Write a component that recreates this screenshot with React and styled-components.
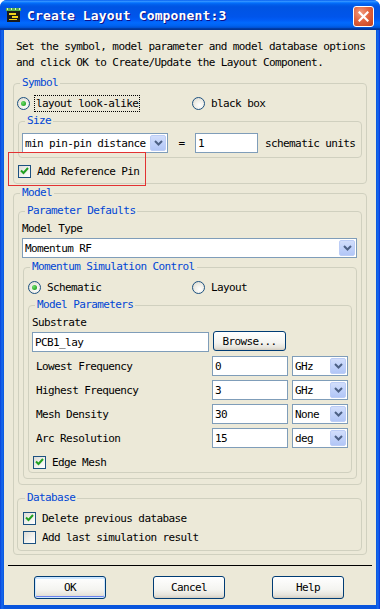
import React from "react";
import styled, { createGlobalStyle } from "styled-components";

const GlobalStyle = createGlobalStyle`
  html, body {
    margin: 0;
    padding: 0;
    background: #ffffff;
  }
  body {
    font-family: "DejaVu Sans Mono", "Liberation Mono", monospace;
    font-size: 11px;
    letter-spacing: -0.6px;
    color: #000000;
  }
  * {
    box-sizing: border-box;
  }
`;

const Window = styled.div`
  width: 380px;
  height: 609px;
  display: flex;
  flex-direction: column;
  border-radius: 7px 7px 0 0;
  overflow: hidden;
  background: linear-gradient(to right, #0841d8 0, #166aee 2px, #0855dd 4px, #0855dd 376px, #166aee 378px, #0831d9 380px);
`;

const TitleBar = styled.div`
  height: 30px;
  flex: none;
  display: flex;
  align-items: center;
  padding: 0 6px 0 6px;
  background: linear-gradient(
    to bottom,
    #0058ee 0%,
    #3593ff 4%,
    #288eff 6%,
    #127dff 8%,
    #036ffc 10%,
    #0262ee 14%,
    #0057e5 20%,
    #0054e3 24%,
    #0055eb 56%,
    #005bf5 66%,
    #026afe 76%,
    #0062ef 86%,
    #0052d6 92%,
    #0040ab 94%,
    #003092 100%
  );
`;

const TitleText = styled.span`
  margin-left: 6px;
  margin-top: 1px;
  color: #ffffff;
  font-weight: bold;
  font-size: 13px;
  letter-spacing: 0.15px;
  text-shadow: 1px 1px #0f1089;
  white-space: nowrap;
`;

const CloseButton = styled.div`
  margin-left: auto;
  margin-top: 2px;
  width: 21px;
  height: 21px;
  border: 1px solid #ffffff;
  border-radius: 3px;
  background: radial-gradient(circle at 35% 30%, #f29c80 0%, #e3643f 45%, #c4401c 100%);
  display: flex;
  align-items: center;
  justify-content: center;
`;

const Client = styled.div`
  flex: 1;
  margin: 0 4px 4px;
  background: #ece9d8;
  padding-top: 9px;
  display: flex;
  flex-direction: column;
`;

const Intro = styled.div`
  padding: 0 12px;
  line-height: 16px;
  white-space: nowrap;
`;

const Group = styled.fieldset`
  margin: ${(p) => p.$margin || "0"};
  padding: ${(p) => p.$padding || "0"};
  border: 1px solid #d0d0bf;
  border-radius: 4px;
  min-width: 0;
  display: flex;
  flex-direction: column;
`;

const Legend = styled.legend`
  color: #0046d5;
  padding: 0 2px;
  margin-left: ${(p) => p.$offset ?? 3}px;
  line-height: 16px;
`;

const RadioRow = styled.div`
  height: 18px;
  display: grid;
  grid-template-columns: ${(p) => p.$col}px auto;
  align-items: center;
`;

const Choice = styled.label`
  display: flex;
  align-items: center;
  gap: ${(p) => (p.$focus ? 4 : 6)}px;
  white-space: nowrap;
`;

const RadioDot = styled.span`
  width: 13px;
  height: 13px;
  border-radius: 50%;
  border: 1px solid #1c5180;
  background: radial-gradient(circle at 60% 65%, #ffffff 0%, #f0efe8 45%, #d8d6cc 100%);
  display: flex;
  align-items: center;
  justify-content: center;
  flex: none;

  &::after {
    content: "";
    display: ${(p) => (p.$on ? "block" : "none")};
    width: 5px;
    height: 5px;
    border-radius: 50%;
    background: radial-gradient(circle at 35% 35%, #6ede6a 0%, #21a121 80%);
  }
`;

const FocusText = styled.span`
  border: 1px dotted #000000;
  padding: 0 1px;
  line-height: 15px;
`;

const CheckRow = styled.label`
  position: relative;
  height: 18px;
  display: flex;
  align-items: center;
  gap: 6px;
  margin: ${(p) => p.$margin || "0"};
  white-space: nowrap;
`;

const Box = styled.span`
  width: 13px;
  height: 13px;
  border: 1px solid #1c5180;
  background: linear-gradient(135deg, #dcdcd7 0%, #f3f3ef 60%, #ffffff 100%);
  display: flex;
  align-items: center;
  justify-content: center;
  flex: none;
`;

const Annotation = styled.span`
  position: absolute;
  left: -10px;
  top: -10px;
  width: 138px;
  height: 34px;
  border: 1px solid #e23232;
  pointer-events: none;
  z-index: 1;
`;

const SizeRow = styled.div`
  display: flex;
  align-items: center;
  height: 20px;
`;

const Eq = styled.span`
  width: 27px;
  text-align: center;
`;

const Units = styled.span`
  margin-left: 7px;
  white-space: nowrap;
`;

const Field = styled.input`
  width: ${(p) => p.$w}px;
  height: 20px;
  margin: ${(p) => p.$margin || "0"};
  border: 1px solid #7f9db9;
  background: #ffffff;
  padding: 0 2px;
  font: inherit;
  letter-spacing: inherit;
  color: #000000;
  outline: none;
`;

const Combo = styled.div`
  width: ${(p) => (p.$w ? `${p.$w}px` : "auto")};
  height: 20px;
  margin: ${(p) => p.$margin || "0"};
  border: 1px solid #7f9db9;
  background: #ffffff;
  display: flex;
  align-items: center;
  justify-content: space-between;
  padding: 0 1px 0 2px;
  white-space: nowrap;
  overflow: hidden;
`;

const ComboArrow = styled.span`
  width: 16px;
  height: 16px;
  flex: none;
  border-radius: 2px;
  border: 1px solid #bccdf6;
  background: linear-gradient(to bottom, #d2defb 0%, #c1d2fa 50%, #b2c6f6 100%);
  display: flex;
  align-items: center;
  justify-content: center;
`;

const Caption = styled.div`
  line-height: 16px;
`;

const SubstrateRow = styled.div`
  display: flex;
  align-items: flex-start;
  height: 21px;
`;

const ParamGrid = styled.div`
  margin-top: 4px;
  display: grid;
  grid-template-columns: 176px 76px 56px;
  column-gap: 4px;
  row-gap: 4px;
  grid-auto-rows: 20px;
  align-items: center;
`;

const ParamLabel = styled.span`
  padding-left: 4px;
  white-space: nowrap;
`;

const Button = styled.button`
  width: ${(p) => p.$w || 72}px;
  height: ${(p) => p.$h || 23}px;
  margin: ${(p) => p.$margin || "0"};
  border: 1px solid #003c74;
  border-radius: 3px;
  background: linear-gradient(to bottom, #ffffff 0%, #f4f4f0 60%, #e6e4dc 85%, #d6d0c5 100%);
  box-shadow: ${(p) =>
    p.$default
      ? "inset 0 0 0 1px #cee7ff, inset 0 -2px 0 0 #6982ee, inset 0 2px 0 0 #cee7ff"
      : "inset 0 -1px 0 0 #d6d0c5"};
  font: inherit;
  letter-spacing: inherit;
  color: #000000;
  padding: 0;
  flex: none;
`;

const Separator = styled.div`
  margin: 10px 4px 0;
  height: 1px;
  background: #000000;
`;

const ButtonBar = styled.div`
  margin-top: 10px;
  display: flex;
  padding-left: 30px;
  gap: 47px;
`;

const Chevron = () => (
  <svg width="9" height="6" viewBox="0 0 9 6">
    <path d="M1 1 L4.5 4.5 L8 1" fill="none" stroke="#4d6185" strokeWidth="2" />
  </svg>
);

const Check = () => (
  <svg width="9" height="8" viewBox="0 0 9 8">
    <path d="M1 3.5 L3.5 6 L8 1" fill="none" stroke="#21a121" strokeWidth="2" />
  </svg>
);

const AppIcon = () => (
  <svg width="15" height="15" viewBox="0 0 15 15">
    <rect x="0" y="0" width="15" height="3" fill="#5bb04a" />
    <rect x="1" y="0" width="1" height="2" fill="#d8f0c0" />
    <rect x="5" y="0" width="1" height="2" fill="#d8f0c0" />
    <rect x="9" y="0" width="1" height="2" fill="#d8f0c0" />
    <rect x="13" y="0" width="1" height="2" fill="#d8f0c0" />
    <rect x="1" y="3" width="13" height="11" fill="#1a1a1a" />
    <rect x="3" y="5" width="7" height="2" fill="#f2d21b" />
    <rect x="6" y="8" width="6" height="2" fill="#f2d21b" />
    <rect x="3" y="11" width="8" height="1" fill="#f2d21b" />
  </svg>
);

const Radio = ({ on, focus, children }) => (
  <Choice $focus={focus}>
    <RadioDot $on={on} />
    {focus ? <FocusText>{children}</FocusText> : <span>{children}</span>}
  </Choice>
);

const CheckBox = ({ on, margin, children, annotate }) => (
  <CheckRow $margin={margin}>
    <Box>{on && <Check />}</Box>
    <span>{children}</span>
    {annotate && <Annotation />}
  </CheckRow>
);

const Dropdown = ({ w, margin, children }) => (
  <Combo $w={w} $margin={margin}>
    <span>{children}</span>
    <ComboArrow>
      <Chevron />
    </ComboArrow>
  </Combo>
);

const params = [
  { label: "Lowest Frequency", value: "0", unit: "GHz" },
  { label: "Highest Frequency", value: "3", unit: "GHz" },
  { label: "Mesh Density", value: "30", unit: "None" },
  { label: "Arc Resolution", value: "15", unit: "deg" },
];

export default function App() {
  return (
    <>
      <GlobalStyle />
      <Window>
        <TitleBar>
          <AppIcon />
          <TitleText>Create Layout Component:3</TitleText>
          <CloseButton>
            <svg width="11" height="11" viewBox="0 0 11 11">
              <path d="M1.5 1.5 L9.5 9.5 M9.5 1.5 L1.5 9.5" stroke="#ffffff" strokeWidth="2.2" strokeLinecap="square" />
            </svg>
          </CloseButton>
        </TitleBar>

        <Client>
          <Intro>
            Set the symbol, model parameter and model database options
            <br />
            and click OK to Create/Update the Layout Component.
          </Intro>

          <Group $margin="4px 9px 0" $padding="3px 3px 3px">
            <Legend>Symbol</Legend>
            <RadioRow $col={175}>
              <Radio on focus>layout look-alike</Radio>
              <Radio>black box</Radio>
            </RadioRow>
            <Group $margin="1px 1px 0" $padding="4px 3px 4px">
              <Legend>Size</Legend>
              <SizeRow>
                <Dropdown w={146}>min pin-pin distance</Dropdown>
                <Eq>=</Eq>
                <Field $w={63} value="1" readOnly />
                <Units>schematic units</Units>
              </SizeRow>
            </Group>
            <CheckBox on margin="4px 0 0 1px" annotate>
              Add Reference Pin
            </CheckBox>
          </Group>

          <Group $margin="1px 9px 0" $padding="2px 3px 3px">
            <Legend>Model</Legend>
            <Group $margin="0 1px" $padding="2px 3px 5px">
              <Legend>Parameter Defaults</Legend>
              <Caption>Model Type</Caption>
              <Dropdown margin="1px 1px 0 0">Momentum RF</Dropdown>
              <Group $margin="1px 1px 0" $padding="3px 4px 5px">
                <Legend $offset={2}>Momentum Simulation Control</Legend>
                <RadioRow $col={164}>
                  <Radio on>Schematic</Radio>
                  <Radio>Layout</Radio>
                </RadioRow>
                <Group $margin="1px 0 0" $padding="2px 3px 1px">
                  <Legend>Model Parameters</Legend>
                  <Caption>Substrate</Caption>
                  <SubstrateRow>
                    <Field $w={177} $margin="1px 0 0" value="PCB1_lay" readOnly />
                    <Button $w={73} $h={20} $margin="0 0 0 4px">
                      Browse...
                    </Button>
                  </SubstrateRow>
                  <ParamGrid>
                    {params.map((p) => (
                      <React.Fragment key={p.label}>
                        <ParamLabel>{p.label}</ParamLabel>
                        <Field $w={76} value={p.value} readOnly />
                        <Dropdown w={56}>{p.unit}</Dropdown>
                      </React.Fragment>
                    ))}
                  </ParamGrid>
                  <CheckBox on margin="5px 0 0 1px">
                    Edge Mesh
                  </CheckBox>
                </Group>
              </Group>
            </Group>
            <Group $margin="5px 1px 0 0" $padding="3px 5px 4px">
              <Legend $offset={2}>Database</Legend>
              <CheckBox on>Delete previous database</CheckBox>
              <CheckBox margin="1px 0 0">Add last simulation result</CheckBox>
            </Group>
          </Group>

          <Separator />
          <ButtonBar>
            <Button $default>OK</Button>
            <Button>Cancel</Button>
            <Button>Help</Button>
          </ButtonBar>
        </Client>
      </Window>
    </>
  );
}
